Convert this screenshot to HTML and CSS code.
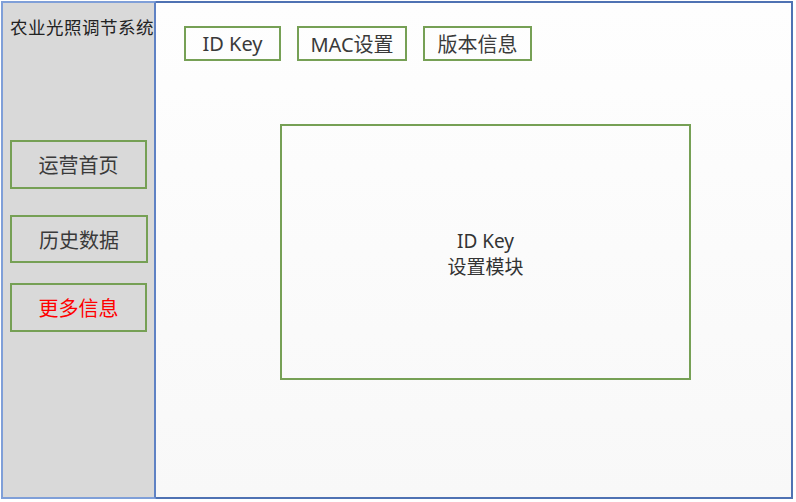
FILE: index.html
```html
<!DOCTYPE html>
<html lang="zh-CN">
<head>
    <meta charset="UTF-8">
    <title>农业光照调节系统</title>
    <link rel="stylesheet" href="styles.css">
</head>
<body>

    <div class="frame">
        <!-- Sidebar -->
        <aside class="sidebar">
            <h1 class="title">农业光照调节系统</h1>
            <nav class="side-nav">
                <a href="#" class="side-btn first">运营首页</a>
                <a href="#" class="side-btn second">历史数据</a>
                <a href="#" class="side-btn third active">更多信息</a>
            </nav>
        </aside>

        <!-- Main -->
        <main class="main">
            <div class="tabs">
                <a href="#" class="tab tab-id">ID Key</a>
                <a href="#" class="tab tab-mac">MAC设置</a>
                <a href="#" class="tab tab-ver">版本信息</a>
            </div>
            <div class="panel">
                <p class="panel-line">ID Key</p>
                <p class="panel-line">设置模块</p>
            </div>
        </main>
    </div>

</body>
</html>
```

FILE: styles.css
```css
/* Reset */
* { margin: 0; padding: 0; box-sizing: border-box; }
body { font-family: 'Noto Sans', 'Noto Sans CJK SC', sans-serif; background-color: #fff; color: #3a3a3a; padding: 1px 0 0 1px; }
a { text-decoration: none; color: inherit; }

/* Frame */
.frame { display: flex; width: 792px; height: 498px; }

/* Sidebar */
.sidebar { width: 155px; background-color: #d9d9d9; border: 2px solid #7f9fd8; border-right-color: #5f82c4; padding: 12px 0 0 7px; }
.title { font-size: 17.5px; font-weight: 400; line-height: 24px; color: #222; white-space: nowrap; letter-spacing: 0.5px; }
.side-nav { display: flex; flex-direction: column; margin-top: 101px; }
.side-btn { display: flex; align-items: center; justify-content: center; width: 137px; height: 49px; border: 2px solid #76a055; font-size: 20px; color: #3a3a3a; }
.side-btn.second { margin-top: 26px; width: 138px; height: 48px; }
.side-btn.third { margin-top: 20px; }
.side-btn.active { color: #ff0000; }

/* Main */
.main { flex: 1; background: linear-gradient(#fefefe, #f8f8f8); border: 2px solid #4f72b3; border-left: none; padding: 23px 0 0 28px; }
.tabs { display: flex; }
.tab { display: flex; align-items: center; justify-content: center; height: 35px; border: 2px solid #76a055; font-size: 20px; color: #3a3a3a; }
.tab-id { width: 97px; }
.tab-mac { width: 110px; margin-left: 16px; }
.tab-ver { width: 109px; margin-left: 16px; }

.panel { display: flex; flex-direction: column; align-items: center; justify-content: center; width: 411px; height: 256px; margin: 63px 0 0 96px; border: 2px solid #76a055; padding-top: 4px; }
.panel-line { font-size: 19px; line-height: 26px; text-align: center; color: #333; }
```
